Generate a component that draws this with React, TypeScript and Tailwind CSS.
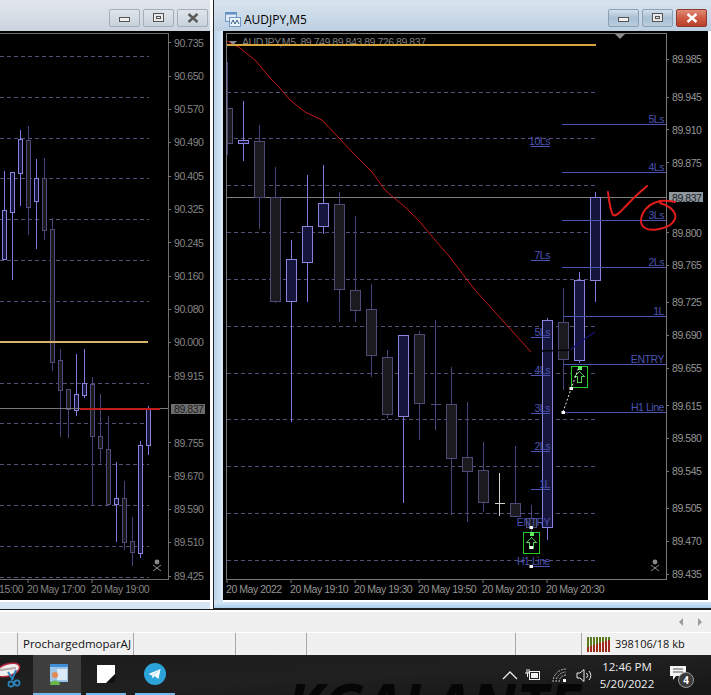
import { Fragment } from 'react';

type Candle = { x: number; high: number; top: number; bottom: number; low: number; bull?: boolean; doji?: string };
type Tick = { label: string; y: number };

const leftCandles: Candle[] = [
  { x: 4.5, high: 171, top: 210, bottom: 259, low: 259, bull: true },
  { x: 12.5, high: 172, top: 172, bottom: 212, low: 280, bull: true },
  { x: 20.5, high: 130, top: 139, bottom: 173, low: 206, bull: true },
  { x: 28.5, high: 126, top: 140, bottom: 207, low: 235 },
  { x: 36.5, high: 159, top: 178, bottom: 201, low: 249, bull: true },
  { x: 44.5, high: 158, top: 178, bottom: 230, low: 240 },
  { x: 52.5, high: 218, top: 229, bottom: 362, low: 371 },
  { x: 60.5, high: 349, top: 360, bottom: 390, low: 437 },
  { x: 68.5, high: 389, top: 389, bottom: 409, low: 438 },
  { x: 76.5, high: 354, top: 394, bottom: 410, low: 416, bull: true },
  { x: 84.5, high: 349, top: 383, bottom: 395, low: 398, bull: true },
  { x: 92.5, high: 377, top: 384, bottom: 436, low: 506 },
  { x: 100.5, high: 394, top: 436, bottom: 448, low: 463 },
  { x: 108.5, high: 416, top: 449, bottom: 504, low: 504 },
  { x: 116.5, high: 462, top: 498, bottom: 504, low: 542, bull: true },
  { x: 124.5, high: 481, top: 498, bottom: 542, low: 550 },
  { x: 132.5, high: 517, top: 541, bottom: 552, low: 566 },
  { x: 140.5, high: 441, top: 445, bottom: 553, low: 558, bull: true },
  { x: 148.5, high: 406, top: 409, bottom: 445, low: 455, bull: true },
];

const rightCandles: Candle[] = [
  { x: 243.5, high: 101, top: 140, bottom: 143, low: 161, bull: true },
  { x: 259.5, high: 125, top: 141, bottom: 197, low: 229 },
  { x: 275.5, high: 167, top: 197, bottom: 301, low: 303 },
  { x: 291.5, high: 240, top: 259, bottom: 301, low: 422, bull: true },
  { x: 307.5, high: 175, top: 226, bottom: 262, low: 302, bull: true },
  { x: 323.5, high: 165, top: 203, bottom: 226, low: 234, bull: true },
  { x: 339.5, high: 192, top: 204, bottom: 289, low: 322 },
  { x: 355.5, high: 216, top: 290, bottom: 310, low: 322 },
  { x: 371.5, high: 284, top: 309, bottom: 355, low: 377 },
  { x: 387.5, high: 350, top: 357, bottom: 414, low: 418 },
  { x: 403.5, high: 335, top: 335, bottom: 416, low: 503, bull: true },
  { x: 419.5, high: 331, top: 334, bottom: 403, low: 440 },
  { x: 435.5, high: 320, top: 404, bottom: 404, low: 430, doji: '#4a4a80' },
  { x: 451.5, high: 367, top: 404, bottom: 458, low: 515 },
  { x: 467.5, high: 402, top: 457, bottom: 471, low: 522 },
  { x: 483.5, high: 442, top: 470, bottom: 502, low: 512 },
  { x: 499.5, high: 473, top: 503, bottom: 503, low: 516, doji: '#d0d0d0' },
  { x: 515.5, high: 446, top: 503, bottom: 516, low: 516 },
  { x: 531.5, high: 505, top: 518, bottom: 527, low: 552 },
  { x: 547.5, high: 318, top: 320, bottom: 527, low: 540, bull: true },
  { x: 563.5, high: 288, top: 322, bottom: 359, low: 390 },
  { x: 579.5, high: 272, top: 280, bottom: 360, low: 363, bull: true },
  { x: 595.5, high: 192, top: 197, bottom: 280, low: 302, bull: true },
];

const leftTicks: Tick[] = [
  { label: '90.735', y: 42.5 }, { label: '90.650', y: 76 }, { label: '90.570', y: 109 },
  { label: '90.490', y: 142 }, { label: '90.405', y: 176 }, { label: '90.325', y: 209 },
  { label: '90.245', y: 242.5 }, { label: '90.160', y: 276 }, { label: '90.080', y: 309 },
  { label: '90.000', y: 342 }, { label: '89.915', y: 376 }, { label: '89.755', y: 442.5 },
  { label: '89.670', y: 476 }, { label: '89.590', y: 509 }, { label: '89.510', y: 542 },
  { label: '89.425', y: 576 },
];

const rightTicks: Tick[] = [
  { label: '89.985', y: 59 }, { label: '89.945', y: 97 }, { label: '89.910', y: 129.5 },
  { label: '89.875', y: 162.5 }, { label: '89.800', y: 232.5 }, { label: '89.765', y: 265 },
  { label: '89.725', y: 302 }, { label: '89.690', y: 335 }, { label: '89.655', y: 368 },
  { label: '89.615', y: 405.5 }, { label: '89.580', y: 438 }, { label: '89.545', y: 471 },
  { label: '89.505', y: 508 }, { label: '89.470', y: 541 }, { label: '89.435', y: 574 },
];

const leftGrid = [56.5, 97.5, 138.5, 178.5, 219.5, 260.5, 301.5, 383.5, 423.5, 464.5, 505.5, 546.5, 577.5];
const rightGrid = [92.5, 138.5, 185.5, 232.5, 279.5, 326.5, 373.5, 419.5, 466.5, 513.5, 560.5];

const farLevels = [
  { label: '5Ls', y: 124.5 }, { label: '4Ls', y: 172.5 }, { label: '3Ls', y: 220.5 }, { label: '2Ls', y: 267.5 },
  { label: '1L', y: 316.5 }, { label: 'ENTRY', y: 364.5 }, { label: 'H1 Line', y: 412.5 },
];

const nearLevels = [
  { label: '10Ls', y: 146.5 }, { label: '7Ls', y: 260.5 }, { label: '5Ls', y: 337.5 }, { label: '4Ls', y: 375.5 },
  { label: '3Ls', y: 413.5 }, { label: '2Ls', y: 451.5 }, { label: '1L', y: 489.5 }, { label: 'ENTRY', y: 527.5 },
  { label: 'H1 Line', y: 566.5 },
];

const signalHeights = [5, 6, 7, 8, 9, 10, 11, 12];

const axisFont = { fontFamily: '"Liberation Sans", sans-serif', fontSize: 10.5, letterSpacing: -0.45, whiteSpace: 'pre' as const };
const levelBlue = '#4c54b4';

function Candles({ data, half, bright }: { data: Candle[]; half: number; bright: string }) {
  return (
    <>
      {data.map((c) => {
        if (c.doji) {
          return (
            <g key={c.x} stroke={c.doji} shapeRendering="crispEdges">
              <line x1={c.x} x2={c.x} y1={c.high} y2={c.low} />
              <line x1={c.x - 5} x2={c.x + 5} y1={c.top + 0.5} y2={c.top + 0.5} />
            </g>
          );
        }
        const wick = c.bull ? bright : '#46467a';
        return (
          <g key={c.x} shapeRendering="crispEdges">
            <line x1={c.x} x2={c.x} y1={c.high} y2={c.low} stroke={wick} />
            <rect
              x={c.x - half}
              y={c.top + 0.5}
              width={half * 2}
              height={c.bottom - c.top}
              fill={c.bull ? '#16163c' : '#1b1b1f'}
              stroke={c.bull ? '#8a84dc' : '#4f4b78'}
            />
          </g>
        );
      })}
    </>
  );
}

function Skull({ x, y }: { x: number; y: number }) {
  return (
    <g stroke="#8a8a8a" fill="#8a8a8a">
      <circle cx={x} cy={y} r={2.4} stroke="none" />
      <line x1={x - 4} y1={y + 3} x2={x + 4} y2={y + 9} />
      <line x1={x + 4} y1={y + 3} x2={x - 4} y2={y + 9} />
    </g>
  );
}

function ArrowBox({ x, y }: { x: number; y: number }) {
  const a = y + 5;
  return (
    <g shapeRendering="crispEdges">
      <rect x={x - 8} y={y} width={16} height={21} fill="#000" stroke="#22cc22" />
      <path
        d={`M${x} ${a} L${x + 5} ${a + 5} H${x + 2} V${a + 11} H${x - 2} V${a + 5} H${x - 5} Z`}
        fill="none"
        stroke="#4fd04f"
      />
      <rect x={x - 2} y={y - 1} width={4} height={4} fill="#5cf05c" />
    </g>
  );
}

function Dot({ x, y }: { x: number; y: number }) {
  return <rect x={x - 1.5} y={y - 1.5} width={3.5} height={3} fill="#f4f4f4" />;
}

function LeftChart() {
  return (
    <svg width={210} height={569} viewBox="0 31 210 569" className="block bg-black">
      <path d="M0 33.5H168.5V579H0" fill="none" stroke="#6e6e6e" shapeRendering="crispEdges" />
      {leftGrid.map((y) => (
        <line key={y} x1={0} x2={149} y1={y} y2={y} stroke="#54507c" strokeDasharray="4 3" shapeRendering="crispEdges" />
      ))}
      <Candles data={leftCandles} half={2} bright="#7c78e0" />
      <rect x={0} y={341} width={148} height={2} fill="#d8b56c" />
      <line x1={0} x2={168} y1={408.5} y2={408.5} stroke="#777" shapeRendering="crispEdges" />
      <rect x={80} y={408} width={80} height={2} fill="#c01c1c" />
      {leftTicks.map((t) => (
        <Fragment key={t.label}>
          <line x1={168} x2={171} y1={t.y} y2={t.y} stroke="#777" shapeRendering="crispEdges" />
          <text x={174} y={t.y} dominantBaseline="central" fill="#858585" style={axisFont}>{t.label}</text>
        </Fragment>
      ))}
      <rect x={171} y={404} width={34} height={10} fill="#6e6e6e" />
      <text x={174} y={408.5} dominantBaseline="central" fill="#1c1c1c" style={axisFont}>89.837</text>
      <Skull x={157} y={562} />
      <line x1={28} x2={28} y1={579} y2={583} stroke="#777" />
      <line x1={92} x2={92} y1={579} y2={583} stroke="#777" />
      <text x={-1} y={589} dominantBaseline="central" fill="#858585" style={axisFont}>15:00</text>
      <text x={27} y={589} dominantBaseline="central" fill="#858585" style={axisFont}>20 May 17:00</text>
      <text x={91} y={589} dominantBaseline="central" fill="#858585" style={axisFont}>20 May 19:00</text>
    </svg>
  );
}

function RightChart() {
  const curve = 'M227 41 L240 48 L256 61 L270 78 L278 86 L290 100 L305 112 L322 120 L338 137 L355 155 L372 172 L385 190 L393 197 L405 207 L420 222 L435 240 L449 256 L465 277 L475 290 L531 352';
  return (
    <svg width={485} height={569} viewBox="223 31 485 569" className="block bg-black">
      <path d="M226.5 33.5H666.5V579H226.5Z" fill="none" stroke="#7a7a7a" shapeRendering="crispEdges" />
      {rightGrid.map((y) => (
        <line key={y} x1={227} x2={597} y1={y} y2={y} stroke="#54507c" strokeDasharray="4 3" shapeRendering="crispEdges" />
      ))}
      <line x1={226} x2={666} y1={197.5} y2={197.5} stroke="#7e7e7e" shapeRendering="crispEdges" />
      <Candles data={rightCandles} half={5} bright="#7c78e0" />
      <g shapeRendering="crispEdges">
        <line x1={227.5} x2={227.5} y1={62} y2={155} stroke="#46467a" />
        <rect x={227.5} y={108.5} width={5} height={35} fill="#1b1b1f" stroke="#4f4b78" />
      </g>
      <path d={curve} fill="none" stroke="#dc1818" strokeWidth={0.9} />
      <path d="M542 351 L570 350" fill="none" stroke="#050505" strokeWidth={1.5} />
      <path d="M570 350 L583 340 L595 332" fill="none" stroke="#141470" strokeWidth={1.5} />
      <text x={242} y={42} dominantBaseline="central" fill="#7e7e7e" style={axisFont}>AUDJPY,M5  89.749 89.843 89.726 89.837</text>
      <rect x={227} y={44} width={369} height={2} fill="#d8a63e" />
      <path d="M229 41H237L233 45Z" fill="#8a8a8a" />
      <path d="M615 34H625L620 39Z" fill="#8a8a8a" />
      {farLevels.map((l) => {
        const from = l.y < 300 ? 562 : 563;
        return (
          <Fragment key={l.label}>
            <line x1={from} x2={666} y1={l.y} y2={l.y} stroke={levelBlue} shapeRendering="crispEdges" />
            <text x={664} y={l.y - 6} textAnchor="end" dominantBaseline="central" fill={levelBlue} style={axisFont}>{l.label}</text>
          </Fragment>
        );
      })}
      {nearLevels.map((l) => (
        <Fragment key={l.label}>
          {l.label !== 'ENTRY' && <line x1={531} x2={550} y1={l.y} y2={l.y} stroke={levelBlue} shapeRendering="crispEdges" />}
          <text x={550} y={l.y - 6} textAnchor="end" dominantBaseline="central" fill={levelBlue} style={axisFont}>{l.label}</text>
        </Fragment>
      ))}
      <ArrowBox x={579.5} y={366.5} />
      <path d="M563 412 L571 389 L579 367" fill="none" stroke="#e8e8e8" strokeDasharray="2 2" />
      <Dot x={571} y={388.5} />
      <Dot x={563} y={412.5} />
      <ArrowBox x={531.5} y={532.5} />
      <Dot x={531} y={527.5} />
      <Dot x={531} y={547.5} />
      <Dot x={531} y={566.5} />
      {rightTicks.map((t) => (
        <Fragment key={t.label}>
          <line x1={666} x2={669} y1={t.y} y2={t.y} stroke="#777" shapeRendering="crispEdges" />
          <text x={672} y={t.y} dominantBaseline="central" fill="#959595" style={axisFont}>{t.label}</text>
        </Fragment>
      ))}
      <rect x={669} y={192} width={34} height={10} fill="#8e979e" />
      <text x={672} y={197.5} dominantBaseline="central" fill="#1c1c1c" style={axisFont}>89.837</text>
      <Skull x={655} y={562} />
      {['20 May 2022', '20 May 19:10', '20 May 19:30', '20 May 19:50', '20 May 20:10', '20 May 20:30'].map((label, i) => (
        <Fragment key={label}>
          <line x1={227 + i * 64} x2={227 + i * 64} y1={579} y2={583} stroke="#777" />
          <text x={226 + i * 64} y={589} dominantBaseline="central" fill="#959595" style={axisFont}>{label}</text>
        </Fragment>
      ))}
      {/* hand drawn marks */}
      <path d="M608 192 C609 200 610 210 613 215 C616 217 620 212 626 206 C633 198 640 192 647 186" fill="none" stroke="#e31c1c" strokeWidth={2} strokeLinecap="round" />
      <path d="M675 202 C670 201 665 200 660 201 C652 203 646 207 643 213 C640 219 640 225 645 228 C650 231 662 230 670 225 C675 221 676 217 675 214 C673 209 667 205 660 203" fill="none" stroke="#e31c1c" strokeWidth={2} strokeLinecap="round" />
    </svg>
  );
}

function TitleButton({ kind, active }: { kind: 'min' | 'max' | 'close'; active?: boolean }) {
  const base = 'w-[31px] h-[18px] rounded-[2px] border flex items-center justify-center';
  const face =
    kind === 'close' && active
      ? 'border-[#8c3a2e] bg-gradient-to-b from-[#e08a78] via-[#cf5a42] to-[#b8402c]'
      : active
        ? 'border-[#8aa0b4] bg-gradient-to-b from-[#d3e0ec] via-[#a9bfd3] to-[#b9cddf]'
        : 'border-[#a4aeb8] bg-gradient-to-b from-[#dfe5ea] to-[#c8d2dc]';
  return (
    <div className={`${base} ${face}`}>
      {kind === 'min' && <div className="w-[11px] h-[5px] mt-[3px] bg-[#f0f0f0] border border-[#555]" />}
      {kind === 'max' && (
        <div className="w-[11px] h-[9px] -mt-[1px] bg-[#e8e8e8] border border-[#555] flex items-center justify-center">
          <div className="w-[5px] h-[3px] border border-[#555]" />
        </div>
      )}
      {kind === 'close' && (
        <svg width={12} height={10} viewBox="0 0 12 10">
          <path d="M1.5 1 L10.5 9 M10.5 1 L1.5 9" stroke={active ? '#fff' : '#5a5a5a'} strokeWidth={2.4} />
        </svg>
      )}
    </div>
  );
}

function WindowIcon() {
  return (
    <svg width={16} height={15} viewBox="0 0 16 15">
      <rect x={0.5} y={0.5} width={11} height={9} fill="#dfeaf6" stroke="#6f98c4" />
      <rect x={0.5} y={0.5} width={11} height={2} fill="#5c8ec4" />
      <rect x={4.5} y={5.5} width={11} height={9} fill="#eaf2fa" stroke="#6f98c4" />
      <path d="M6 12 L8 8 L10 12 L12 8 L14 12" fill="none" stroke="#33648f" />
    </svg>
  );
}

function SnipIcon() {
  return (
    <svg width={21} height={27} viewBox="0 0 21 27">
      <ellipse cx={8} cy={8} rx={12} ry={6} transform="rotate(-18 8 8)" fill="#eee" stroke="#b5283a" strokeWidth={1.5} />
      <path d="M0 8 L16 6" stroke="#b9a8a8" strokeWidth={2} />
      <path d="M8 10 L13 18 M16 8 L12 18" stroke="#2c86c0" strokeWidth={2} />
      <circle cx={11} cy={22} r={2.6} fill="none" stroke="#2c86c0" strokeWidth={1.6} />
      <circle cx={17} cy={21} r={2.6} fill="none" stroke="#2c86c0" strokeWidth={1.6} />
    </svg>
  );
}

function AppIcon() {
  return (
    <svg width={20} height={22} viewBox="0 0 20 22">
      <rect x={1} y={1} width={18} height={18} fill="#9cc5ea" />
      <rect x={1} y={1} width={18} height={3} fill="#3f8fd6" />
      <rect x={8} y={6} width={10} height={11} fill="#dbe8f5" />
      <circle cx={6} cy={12} r={3} fill="#e58a52" />
      <path d="M1 22 C1 16 11 16 11 22Z" fill="#6ab84a" />
    </svg>
  );
}

function NoteIcon() {
  return (
    <svg width={18} height={18} viewBox="0 0 18 18">
      <rect width={18} height={18} fill="#fff" />
      <path d="M9 18 L18 9 V18Z" fill="#111" />
    </svg>
  );
}

function TelegramIcon() {
  return (
    <svg width={22} height={22} viewBox="0 0 22 22">
      <circle cx={11} cy={11} r={11} fill="#2ca3d9" />
      <path d="M4.5 11 L16.5 6 L14.5 16 L10.5 13 L8.5 15.5 L8 12.5 Z" fill="#fff" />
      <path d="M8 12.5 L14.5 8" stroke="#a9d6ec" />
    </svg>
  );
}

function SignalBars() {
  return (
    <div className="flex items-end gap-[1px] h-[15px]">
      {signalHeights.map((red) => (
        <div key={red} className="w-[2px] h-[15px] bg-[#5c7a1e] flex flex-col justify-end">
          <div className="bg-[#a02a1c]" style={{ height: red }} />
        </div>
      ))}
    </div>
  );
}

function TrayIcons() {
  return (
    <div className="flex items-center">
      <svg width={16} height={10} viewBox="0 0 16 10" className="mr-[6px]">
        <path d="M1 9 L8 2 L15 9" fill="none" stroke="#e8e8e8" strokeWidth={1.3} />
      </svg>
      <svg width={17} height={14} viewBox="0 0 17 14" className="mr-[11px]">
        <path d="M1 5 H6 M3 1 V5 M5 1 V5 M3.5 5 V9" stroke="#eee" />
        <rect x={5.5} y={3.5} width={10} height={8} fill="none" stroke="#eee" />
        <rect x={7} y={5} width={7} height={5} fill="#eee" />
      </svg>
      <svg width={16} height={15} viewBox="0 0 16 15" className="mr-[8px]">
        <path d="M1 14 A13 13 0 0 1 14 1 M4 14 A10 10 0 0 1 14 4 M7 14 A7 7 0 0 1 14 7" fill="none" stroke="#bdbdbd" strokeDasharray="2 1" />
        <rect x={11} y={11} width={3} height={3} fill="#fff" />
      </svg>
      <svg width={17} height={15} viewBox="0 0 17 15">
        <path d="M1 5 H4 L8 1.5 V13.5 L4 10 H1 Z" fill="none" stroke="#e8e8e8" />
        <path d="M10.5 5 A3.5 3.5 0 0 1 10.5 10 M13 3 A6.5 6.5 0 0 1 13 12" fill="none" stroke="#e8e8e8" />
      </svg>
    </div>
  );
}

export default function App() {
  return (
    <div className="w-[711px] h-[695px] overflow-hidden flex flex-col bg-[#f0f0f0] font-['Liberation_Sans',sans-serif]">
      <div className="flex h-[609px] shrink-0">
        {/* left chart window */}
        <div className="w-[214px] shrink-0 flex flex-col bg-white border-r border-[#222]">
          <div className="h-[31px] w-[210px] flex items-start justify-end gap-[3px] pt-[9px] pr-[2px] bg-gradient-to-b from-[#e2e7ec] to-[#cad4de]">
            <TitleButton kind="min" />
            <TitleButton kind="max" />
            <TitleButton kind="close" />
          </div>
          <LeftChart />
          <div className="h-[2px]" />
          <div className="h-[7px] w-[210px] bg-[#d6e4f3]" />
        </div>
        {/* right chart window */}
        <div className="flex-1 flex flex-col pt-[1px] bg-[#cfe0f0]">
          <div className="h-[30px] flex items-start pt-[11px] pl-[11px] pr-[4px] bg-gradient-to-b from-[#d9e4ee] to-[#bccfe2]">
            <WindowIcon />
            <span className="ml-[3px] text-[12px] leading-[16px] text-black font-['Open_Sans',sans-serif]">AUDJPY,M5</span>
            <div className="ml-auto -mt-[3px] flex gap-[3px]">
              <TitleButton kind="min" active />
              <TitleButton kind="max" active />
              <TitleButton kind="close" active />
            </div>
          </div>
          <div className="flex">
            <div className="w-[9px] bg-gradient-to-r from-[#b9d3ec] to-[#dbe8f4]" />
            <RightChart />
            <div className="w-[3px] bg-white" />
          </div>
          <div className="h-[2px] ml-[9px] bg-white" />
          <div className="flex-1 border-b border-[#222] bg-gradient-to-b from-[#d8e6f4] to-[#a9cdea]" />
        </div>
      </div>

      <div className="h-[1px] bg-[#1a1a1a] shrink-0" />

      {/* toolbar strip */}
      <div className="h-[22px] shrink-0 flex items-center justify-end gap-[15px] pr-[9px] border-t-2 border-white">
        <div className="w-0 h-0 border-y-[4px] border-y-transparent border-r-[4px] border-r-[#9a9a9a]" />
        <div className="w-0 h-0 border-y-[4px] border-y-transparent border-l-[4px] border-l-[#9a9a9a]" />
      </div>

      {/* status bar */}
      <div className="h-[23px] shrink-0 flex border-t border-white text-[#111] font-['Open_Sans',sans-serif]">
        <div className="w-[18px] border-r border-[#a8a8a8]" />
        <div className="w-[116px] pl-[5px] text-[11.5px] leading-[21px] whitespace-nowrap border-r border-[#a8a8a8]">ProchargedmoparAJ</div>
        <div className="w-[102px] border-r border-[#a8a8a8]" />
        <div className="w-[71px] border-r border-[#a8a8a8]" />
        <div className="w-[209px] border-r border-[#a8a8a8]" />
        <div className="w-[66px] border-r border-[#a8a8a8]" />
        <div className="flex items-center pl-[5px] gap-[5px]">
          <SignalBars />
          <span className="text-[11px] whitespace-nowrap">398106/18 kb</span>
        </div>
      </div>

      {/* taskbar */}
      <div className="relative h-[40px] shrink-0 flex items-center bg-gradient-to-br from-[#1c1c1c] via-[#202020] to-[#161616] text-white overflow-hidden font-['Open_Sans',sans-serif]">
        <span className="absolute left-[286px] top-[20px] text-[60px] leading-[60px] font-bold italic whitespace-nowrap text-[#060606]">KGALANTE</span>
        <div className="relative w-[33px] h-full flex items-center">
          <SnipIcon />
        </div>
        <div className="relative w-[48px] h-full flex items-center justify-center pl-[3px] bg-[#3e3e3e] border-b-2 border-[#76b9ed]">
          <AppIcon />
        </div>
        <div className="relative ml-[5px] w-[40px] h-full flex items-center justify-center border-b-2 border-[#76b9ed]">
          <NoteIcon />
        </div>
        <div className="relative ml-[9px] w-[40px] h-full flex items-center justify-center border-b-2 border-[#76b9ed]">
          <TelegramIcon />
        </div>
        <div className="relative ml-auto flex items-center">
          <TrayIcons />
          <div className="w-[56px] ml-[6px] text-center text-[11.5px] leading-[17px] whitespace-nowrap text-[#eee]">
            <div>12:46 PM</div>
            <div>5/20/2022</div>
          </div>
          <div className="relative ml-[15px] mr-[25px] w-[16px] h-[18px]">
            <svg width={16} height={14} viewBox="0 0 16 14" className="absolute top-0 left-0">
              <path d="M0 0 H16 V10 H6 L3 14 V10 H0 Z" fill="#f4f4f4" />
              <path d="M3 3 H13 M3 6 H13" stroke="#555" />
            </svg>
            <div className="absolute -right-[8px] top-[6px] w-[16px] h-[16px] rounded-full bg-[#3a3a3a] border border-[#999] text-[10px] leading-[14px] font-bold text-center">4</div>
          </div>
        </div>
      </div>
    </div>
  );
}
